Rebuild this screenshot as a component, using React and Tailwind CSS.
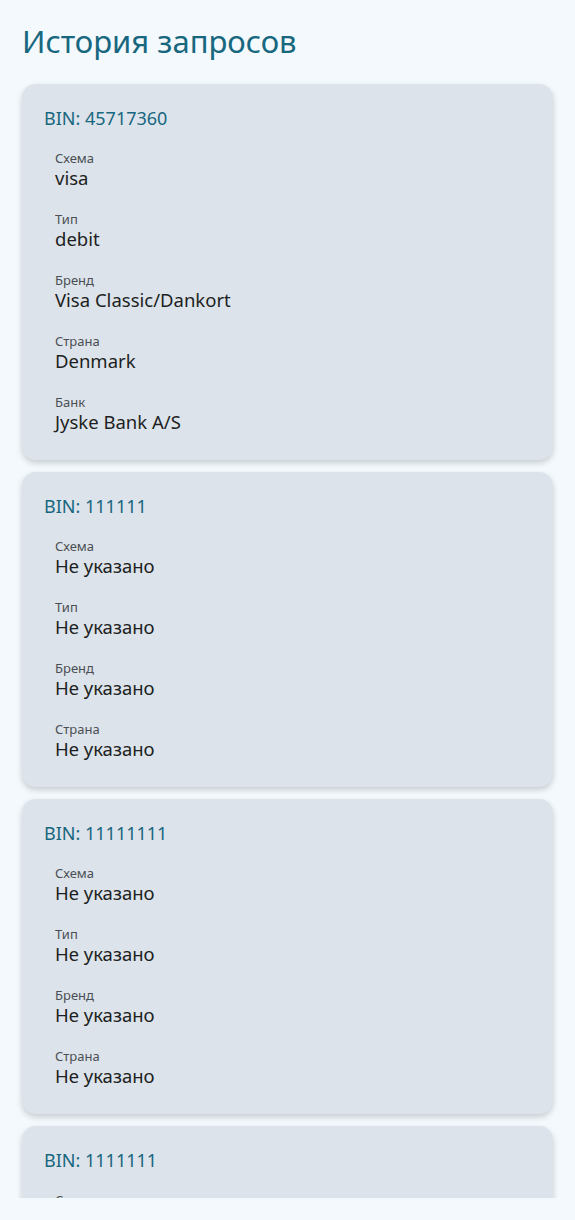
const HISTORY = [
  {
    bin: '45717360',
    fields: [
      ['Схема', 'visa'],
      ['Тип', 'debit'],
      ['Бренд', 'Visa Classic/Dankort'],
      ['Страна', 'Denmark'],
      ['Банк', 'Jyske Bank A/S'],
    ],
  },
  {
    bin: '111111',
    fields: [
      ['Схема', 'Не указано'],
      ['Тип', 'Не указано'],
      ['Бренд', 'Не указано'],
      ['Страна', 'Не указано'],
    ],
  },
  {
    bin: '11111111',
    fields: [
      ['Схема', 'Не указано'],
      ['Тип', 'Не указано'],
      ['Бренд', 'Не указано'],
      ['Страна', 'Не указано'],
    ],
  },
  {
    bin: '1111111',
    fields: [
      ['Схема', 'Не указано'],
      ['Тип', 'Не указано'],
      ['Бренд', 'Не указано'],
      ['Страна', 'Не указано'],
    ],
  },
];

const HistoryCard = ({ item }) => (
  <div className="bg-[#dde3ea] rounded-[14px] shadow-[0_3px_6px_rgba(0,0,0,0.18)] pt-[22px] pb-[26px] px-[22px]">
    <div className="text-[18px] leading-[24px] text-[#17677f]">BIN: {item.bin}</div>
    <div className="mt-[20px] pl-[11px] flex flex-col gap-[21px]">
      {item.fields.map(([label, value]) => (
        <div key={label}>
          <div className="text-[13px] leading-[16px] text-[#4a4f55]">{label}</div>
          <div className="text-[18.5px] leading-[24px] text-[#1c1f23]">{value}</div>
        </div>
      ))}
    </div>
  </div>
);

const App = () => {
  return (
    <div className="h-[1220px] bg-[#f3f9fd] flex flex-col font-['Noto_Sans',sans-serif]">
      <h1 className="px-[22px] pt-[20px] text-[31px] leading-[42px] text-[#17677f]">История запросов</h1>
      <div className="flex-1 overflow-hidden mx-[15px] mb-[22px] px-[7px] pt-[22px]">
        <div className="flex flex-col gap-[12px] pb-4">
          {HISTORY.map((item, i) => (
            <HistoryCard key={i} item={item} />
          ))}
        </div>
      </div>
    </div>
  );
};

export default App;
